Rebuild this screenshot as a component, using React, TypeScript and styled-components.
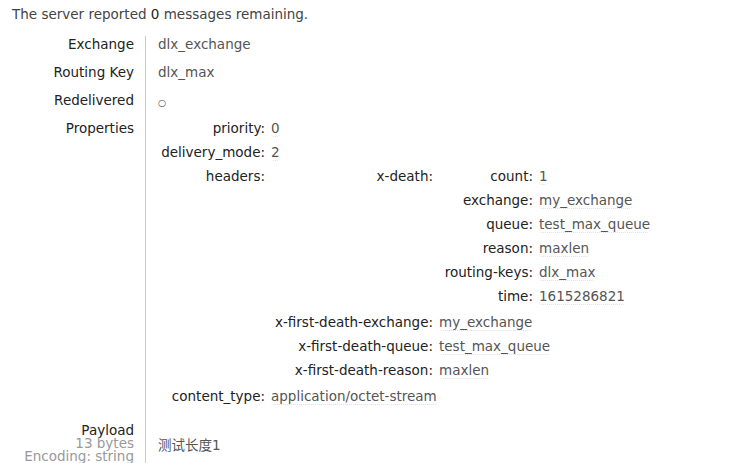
import React from "react";
import styled, { createGlobalStyle } from "styled-components";

const GlobalStyle = createGlobalStyle`
    html, body {
        margin: 0;
        padding: 0;
        background: #fff;
    }
    body {
        font-family: "DejaVu Sans", Verdana, "Noto Sans CJK SC", sans-serif;
        font-size: 13.5px;
        line-height: 16px;
        color: #333;
    }
`;

type Value = string | KV[];
type KV = { key: string; value: Value };

const xDeath: KV[] = [
    { key: "count", value: "1" },
    { key: "exchange", value: "my_exchange" },
    { key: "queue", value: "test_max_queue" },
    { key: "reason", value: "maxlen" },
    { key: "routing-keys", value: "dlx_max" },
    { key: "time", value: "1615286821" },
];

const headers: KV[] = [
    { key: "x-death", value: xDeath },
    { key: "x-first-death-exchange", value: "my_exchange" },
    { key: "x-first-death-queue", value: "test_max_queue" },
    { key: "x-first-death-reason", value: "maxlen" },
];

const properties: KV[] = [
    { key: "priority", value: "0" },
    { key: "delivery_mode", value: "2" },
    { key: "headers", value: headers },
    { key: "content_type", value: "application/octet-stream" },
];

// key column widths per nesting level, so the colons line up like the original
const keyWidths = [107, 162, 94];

const KvTable: React.FC<{ rows: KV[]; depth?: number }> = ({ rows, depth = 0 }) => (
    <MiniTable>
        <tbody>
            {rows.map((row) => (
                <tr key={row.key}>
                    <MiniKey $width={keyWidths[depth]}>{row.key}:</MiniKey>
                    {typeof row.value === "string" ? (
                        <MiniValue>
                            <Boxed>{row.value}</Boxed>
                        </MiniValue>
                    ) : (
                        <MiniValue $nested>
                            <KvTable rows={row.value} depth={depth + 1} />
                        </MiniValue>
                    )}
                </tr>
            ))}
        </tbody>
    </MiniTable>
);

const App: React.FC = () => {
    return (
        <Page>
            <GlobalStyle />
            <Status>
                The server reported <Count>0</Count> messages remaining.
            </Status>
            <Facts>
                <tbody>
                    <tr>
                        <FactLabel>Exchange</FactLabel>
                        <FactValue>dlx_exchange</FactValue>
                    </tr>
                    <tr>
                        <FactLabel>Routing Key</FactLabel>
                        <FactValue>dlx_max</FactValue>
                    </tr>
                    <tr>
                        <FactLabel>Redelivered</FactLabel>
                        <FactValue>
                            <Bool>○</Bool>
                        </FactValue>
                    </tr>
                    <tr>
                        <FactLabel>Properties</FactLabel>
                        <FactValue $nested>
                            <KvTable rows={properties} />
                        </FactValue>
                    </tr>
                    <tr>
                        <FactLabel>
                            Payload
                            <Sub>13 bytes</Sub>
                            <Sub>Encoding: string</Sub>
                        </FactLabel>
                        <FactValue>
                            <Payload>测试长度1</Payload>
                        </FactValue>
                    </tr>
                </tbody>
            </Facts>
        </Page>
    );
};

export default App;

const Page = styled.div`
    padding: 0 12px;
    height: 463px;
    overflow: hidden;
`;

const Status = styled.p`
    margin: 0 0 14px;
    padding-top: 6px;
    color: #444;
`;

const Count = styled.span`
    color: #222;
`;

const Facts = styled.table`
    border-collapse: collapse;
    border-spacing: 0;
`;

const FactLabel = styled.th`
    width: 122px;
    padding: 0 11px 12px 0;
    border-right: 1px solid #ccc;
    text-align: right;
    vertical-align: top;
    font-weight: normal;
    color: #222;
    white-space: nowrap;
`;

const FactValue = styled.td<{ $nested?: boolean }>`
    padding: 0 0 ${({ $nested }) => ($nested ? "10px" : "12px")} 12px;
    vertical-align: top;
    color: #555;
    white-space: nowrap;
`;

const Sub = styled.div`
    line-height: 13px;
    color: #999;
    &:first-of-type {
        margin-top: -1px;
    }
`;

const Bool = styled.span`
    display: inline-block;
    font-size: 9.5px;
    line-height: 8px;
    vertical-align: -1px;
    color: #555;
`;

const Payload = styled.div`
    margin-top: 15px;
    color: #555;
`;

const MiniTable = styled.table`
    border-collapse: collapse;
    border-spacing: 0;
`;

const MiniKey = styled.th<{ $width: number }>`
    width: ${({ $width }) => $width}px;
    padding: 0 0 8px 0;
    text-align: right;
    vertical-align: top;
    font-weight: normal;
    color: #222;
    white-space: nowrap;
`;

const MiniValue = styled.td<{ $nested?: boolean }>`
    padding: 0 0 ${({ $nested }) => ($nested ? "2px" : "8px")} 6px;
    vertical-align: top;
    white-space: nowrap;
`;

const Boxed = styled.span`
    color: #555;
    border-bottom: 1px dotted #ddd;
    border-radius: 3px;
`;
